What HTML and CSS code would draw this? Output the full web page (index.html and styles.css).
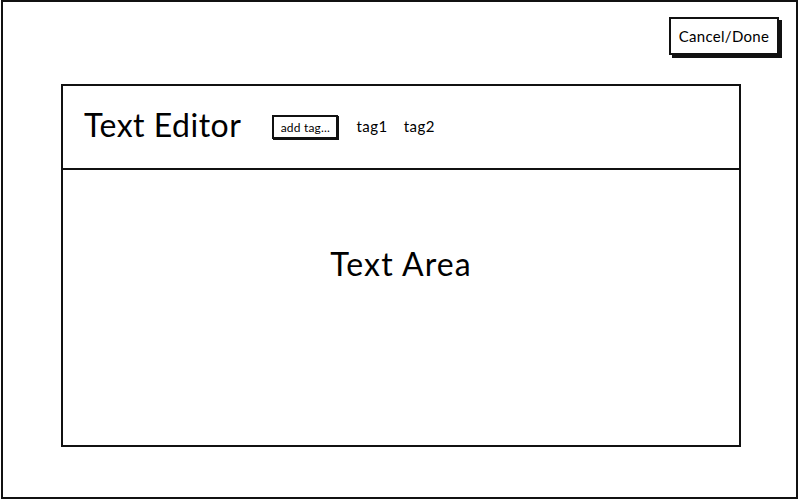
FILE: index.html
```html
<!DOCTYPE html>
<html>
<head>
<meta charset="utf-8">
<link rel="stylesheet" href="styles.css">
</head>
<body>
<div class="frame">
  <div class="toolbar">
    <button class="btn">Cancel/Done</button>
  </div>
  <div class="panel">
    <div class="header">
      <h1 class="title">Text Editor</h1>
      <span class="add-tag">add tag...</span>
      <span class="tag">tag1</span>
      <span class="tag">tag2</span>
    </div>
    <div class="area">
      <div class="area-label">Text Area</div>
    </div>
  </div>
</div>
</body>
</html>
```
FILE: styles.css
```css
html, body {
  margin: 0;
  padding: 0;
  background: #fff;
}
body {
  font-family: Lato, "Open Sans", sans-serif;
  color: #000;
  width: 800px;
  height: 500px;
  overflow: hidden;
}
.frame {
  box-sizing: border-box;
  margin: 0 2px 0 1px;
  width: 797px;
  height: 499px;
  border: 2px solid #111;
  display: flex;
  flex-direction: column;
  padding: 15px 17px 0 58px;
}
.toolbar {
  display: flex;
  justify-content: flex-end;
  height: 38px;
}
.btn {
  box-sizing: border-box;
  height: 38px;
  width: 110px;
  border: 2px solid #111;
  background: #fff;
  font-family: inherit;
  font-size: 15px;
  letter-spacing: 0.3px;
  color: #000;
  padding: 0;
  box-shadow: 3px 3px 0 #111;
}
.panel {
  box-sizing: border-box;
  margin-top: 29px;
  width: 680px;
  height: 363px;
  border: 2px solid #111;
  display: flex;
  flex-direction: column;
}
.header {
  box-sizing: border-box;
  height: 84px;
  border-bottom: 2px solid #111;
  display: flex;
  align-items: center;
  padding-left: 21px;
  padding-bottom: 1px;
}
.title {
  margin: -4px 31px 0 0;
  font-size: 32px;
  font-weight: 400;
  letter-spacing: 0.5px;
}
.add-tag {
  box-sizing: border-box;
  height: 24px;
  width: 66px;
  border: 2px solid #111;
  box-shadow: 1px 1px 0 #111;
  font-size: 12px;
  letter-spacing: 0.2px;
  display: flex;
  align-items: center;
  justify-content: center;
  margin-right: 18px;
  margin-top: 1px;
}
.tag {
  font-size: 15px;
  letter-spacing: 0.5px;
  margin-right: 16px;
  margin-top: -1px;
}
.area {
  flex: 1;
  display: flex;
  justify-content: center;
  padding-top: 76px;
}
.area-label {
  font-size: 32px;
  letter-spacing: 1.1px;
  line-height: 36px;
  height: 36px;
}
```
